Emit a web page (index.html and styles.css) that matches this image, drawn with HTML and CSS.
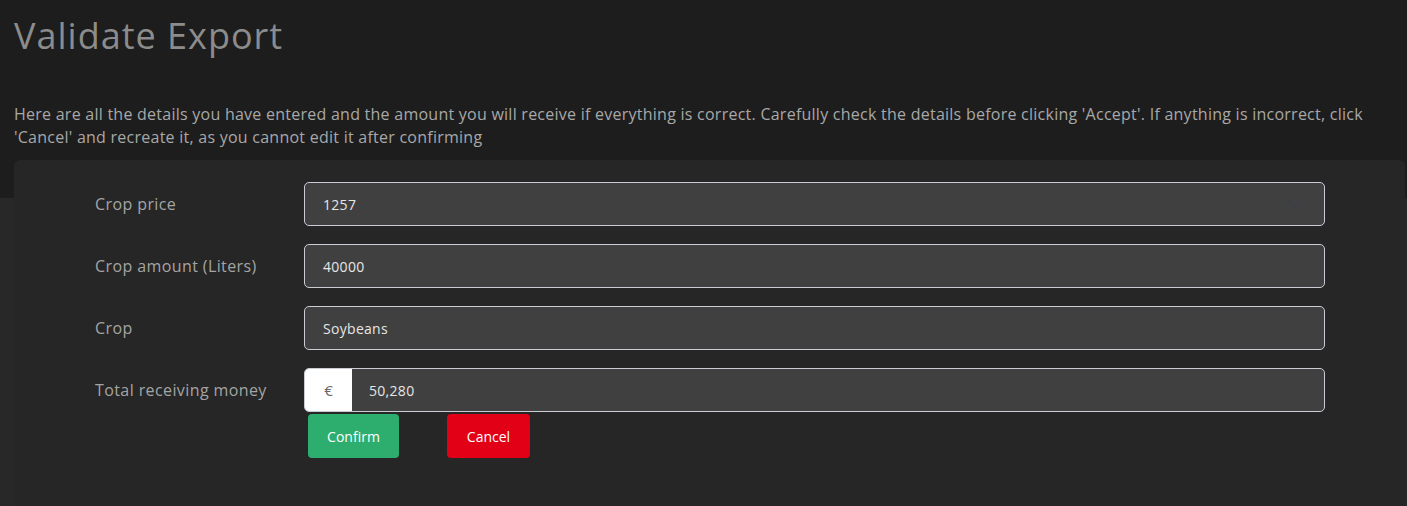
FILE: index.html
```html
<!DOCTYPE html>
<html lang="en">
<head>
<meta charset="utf-8">
<title>Validate Export</title>
<link rel="stylesheet" href="styles.css">
</head>
<body>
<main class="page">
  <h1 class="title">Validate Export</h1>
  <p class="intro">Here are all the details you have entered and the amount you will receive if everything is correct. Carefully check the details before clicking 'Accept'. If anything is incorrect, click 'Cancel' and recreate it, as you cannot edit it after confirming</p>
  <section class="card">
    <div class="row">
      <label class="label">Crop price</label>
      <div class="field select">
        <span class="value">1257</span>
        <svg class="chev" width="14" height="8" viewBox="0 0 14 8"><path d="M1 1l6 5 6-5" fill="none" stroke="#3a3f4a" stroke-width="2"/></svg>
      </div>
    </div>
    <div class="row">
      <label class="label">Crop amount (Liters)</label>
      <div class="field"><span class="value">40000</span></div>
    </div>
    <div class="row">
      <label class="label">Crop</label>
      <div class="field"><span class="value">Soybeans</span></div>
    </div>
    <div class="row">
      <label class="label">Total receiving money</label>
      <div class="field group">
        <span class="addon">€</span>
        <span class="value">50,280</span>
      </div>
    </div>
    <div class="actions">
      <button class="btn confirm">Confirm</button>
      <button class="btn cancel">Cancel</button>
    </div>
  </section>
</main>
</body>
</html>
```
FILE: styles.css
```css
* { box-sizing: border-box; }
html, body { margin: 0; }
body {
  background: linear-gradient(#1d1d1d 0, #1d1d1d 198px, #282828 198px);
  font-family: "Open Sans", "Liberation Sans", sans-serif;
  min-height: 506px;
  overflow: hidden;
}
.page {
  padding: 0 2px 0 14px;
}
.title {
  margin: 0;
  padding-top: 12px;
  font-size: 36px;
  font-weight: 400;
  line-height: 48px;
  letter-spacing: 1px;
  color: #8c8c8c;
}
.intro {
  margin: 43px 0 0;
  font-size: 16px;
  line-height: 23px;
  letter-spacing: 0.25px;
  color: #a8a8a8;
  padding-right: 0;
}
.card {
  margin-top: 11px;
  background: #262626;
  border-radius: 6px;
  padding: 22px 80px 48px 81px;
  min-height: 360px;
}
.row {
  display: flex;
  align-items: center;
  margin-bottom: 18px;
}
.row:nth-child(4) { margin-bottom: 2px; }
.label {
  width: 209px;
  flex: none;
  font-size: 16px;
  letter-spacing: 0.4px;
  color: #a4a4a4;
}
.field {
  flex: 1;
  height: 44px;
  display: flex;
  align-items: center;
  background: #404040;
  border: 1px solid #c9ccd3;
  border-radius: 5px;
  padding: 0 18px;
  position: relative;
}
.value {
  font-size: 14px;
  letter-spacing: 0.3px;
  color: #e6e6e6;
}
.chev {
  position: absolute;
  right: 22px;
  top: 18px;
}
.group { padding: 0; overflow: hidden; }
.addon {
  width: 47px;
  height: 100%;
  background: #fff;
  color: #666;
  display: flex;
  align-items: center;
  justify-content: center;
  font-size: 15px;
  margin-right: 17px;
}
.actions {
  display: flex;
  gap: 48px;
  padding-left: 213px;
}
.btn {
  height: 44px;
  border: none;
  border-radius: 4px;
  color: #fff;
  font-family: inherit;
  font-size: 14px;
  padding: 0 10px;
}
.confirm { background: #2dae6e; width: 91px; }
.cancel { background: #e10016; width: 83px; }
```
